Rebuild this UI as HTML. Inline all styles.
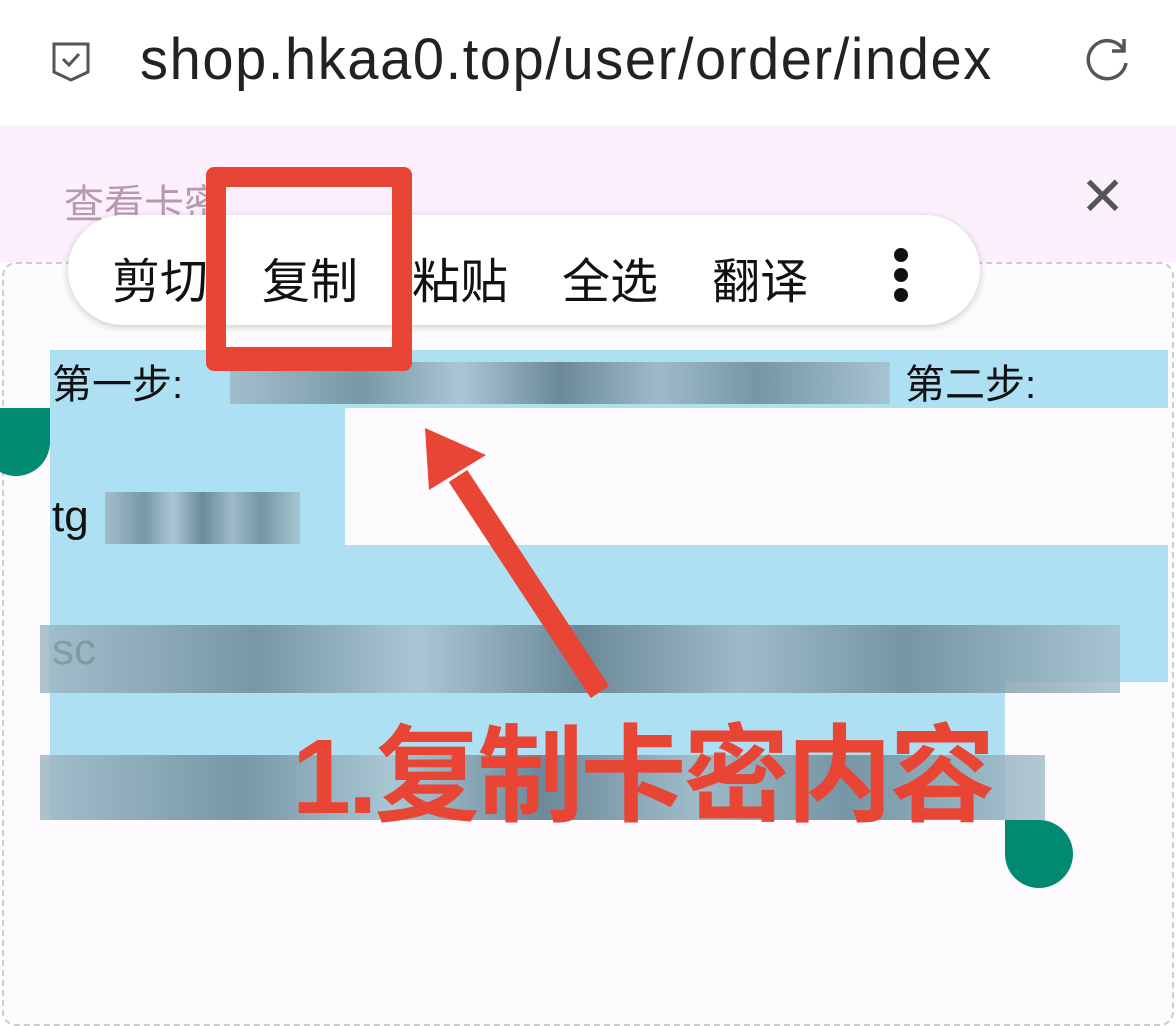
<!DOCTYPE html><html><head><meta charset="utf-8"><style>
body{margin:0;width:1176px;height:1008px;overflow:hidden;background:#fff;position:relative;font-family:"Liberation Sans","Noto Sans CJK SC",sans-serif}
.a{position:absolute}
.blur{position:absolute;background:linear-gradient(90deg,#9fb8c4,#6f8b99 20%,#a8c2cf 35%,#5f7a88 50%,#9ab4c1 65%,#6d8997 80%,#a5bfcb);opacity:.85}
</style></head><body>
<div class="a" style="left:0;top:0;width:1176px;height:125px;background:#fff"></div>
<svg class="a" style="left:50px;top:40px" width="42" height="42" viewBox="0 0 42 42"><path d="M4 4H38V32L21 40L4 32Z" fill="none" stroke="#555" stroke-width="3"/><path d="M13 19L19 25L29 14" fill="none" stroke="#555" stroke-width="3"/></svg>
<div class="a" style="left:140px;top:26px;font-size:56px;color:#222;letter-spacing:1.6px;transform:scaleY(1.05)">shop.hkaa0.top/user/order/index</div>
<svg class="a" style="left:1083px;top:35px" width="50" height="50" viewBox="0 0 50 50"><path d="M40 14A19 19 0 1 0 43 28" fill="none" stroke="#555" stroke-width="3.5"/><path d="M41 4V16H29" fill="none" stroke="#555" stroke-width="3.5"/></svg>
<div class="a" style="left:0;top:125px;width:1176px;height:137px;background:#fbf0fb"></div>
<div class="a" style="left:64px;top:172px;font-size:40px;color:#b89ab0">查看卡密</div>
<div class="a" style="left:1080px;top:165px;font-size:54px;color:#555">✕</div>
<div class="a" style="left:2px;top:262px;width:1168px;height:760px;border:2px dashed #ccc;border-radius:14px;background:#fefbfe"></div>
<div class="a" style="left:50px;top:350px;width:1118px;height:58px;background:#aee0f3"></div>
<div class="a" style="left:50px;top:408px;width:295px;height:137px;background:#aee0f3"></div>
<div class="a" style="left:50px;top:545px;width:1118px;height:137px;background:#aee0f3"></div>
<div class="a" style="left:50px;top:682px;width:955px;height:138px;background:#aee0f3"></div>
<div class="a" style="left:52px;top:352px;font-size:40px;color:#111">第一步:</div>
<div class="a" style="left:905px;top:352px;font-size:40px;color:#111">第二步:</div>
<div class="a" style="left:52px;top:492px;font-size:44px;color:#111">tg</div>
<div class="a" style="left:52px;top:625px;font-size:44px;color:#111">sc</div>
<div class="blur" style="left:230px;top:362px;width:660px;height:42px"></div>
<div class="blur" style="left:105px;top:492px;width:195px;height:52px"></div>
<div class="blur" style="left:40px;top:625px;width:1080px;height:68px"></div>
<div class="blur" style="left:40px;top:755px;width:1005px;height:65px"></div>
<div class="a" style="left:-18px;top:408px;width:68px;height:68px;background:#008a72;border-radius:0 0 34px 34px"></div>
<div class="a" style="left:1005px;top:820px;width:68px;height:68px;background:#008a72;border-radius:0 34px 34px 34px"></div>
<div class="a" style="left:68px;top:215px;width:912px;height:110px;background:#fff;border-radius:55px;box-shadow:0 2px 8px rgba(0,0,0,.2)"></div>
<div class="a" style="left:112px;top:242px;font-size:48px;color:#111;white-space:nowrap">剪切<span style="margin-left:54px">复制</span><span style="margin-left:54px">粘贴</span><span style="margin-left:54px">全选</span><span style="margin-left:54px">翻译</span></div>
<div class="a" style="left:894px;top:248px;width:14px;height:14px;border-radius:7px;background:#111;box-shadow:0 20px 0 #111,0 40px 0 #111"></div>
<div class="a" style="left:206px;top:167px;width:166px;height:160px;border:20px solid #e84535;border-bottom-width:24px;border-radius:8px"></div>
<svg class="a" style="left:0;top:0" width="1176" height="1008"><line x1="600" y1="692" x2="458" y2="476" stroke="#e84535" stroke-width="22"/><polygon points="425,428 486,455 429,490" fill="#e84535"/></svg>
<div class="a" style="left:292px;top:690px;font-size:106px;font-weight:bold;color:#e84535;white-space:nowrap;letter-spacing:-3px">1.复制卡密内容</div>
</body></html>
